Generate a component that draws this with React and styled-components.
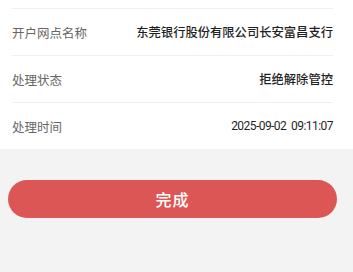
import React from "react";
import styled, { createGlobalStyle } from "styled-components";

const GlobalStyle = createGlobalStyle`
  html, body {
    margin: 0;
    padding: 0;
    background: #f3f3f3;
  }
  body {
    font-family: "Noto Sans CJK SC", "Noto Sans", sans-serif;
    -webkit-font-smoothing: antialiased;
  }
  * { box-sizing: border-box; }
`;

const Page = styled.div`
  width: 353px;
  min-height: 272px;
  background: #f3f3f3;
  display: flex;
  flex-direction: column;
`;

const InfoList = styled.div`
  background: #ffffff;
  padding: 8px 20px 0 12px;
  display: flex;
  flex-direction: column;
`;

const Row = styled.div`
  height: 47px;
  border-top: 1px solid #f0f0f0;
  display: flex;
  align-items: center;
  justify-content: space-between;
`;

const Label = styled.span`
  font-size: 12.5px;
  color: #666666;
  white-space: nowrap;
`;

const Value = styled.span`
  font-family: ${(p) =>
    p.$numeric
      ? '"Roboto", "Liberation Sans", sans-serif'
      : '"Noto Sans CJK SC", "Noto Sans", sans-serif'};
  font-size: ${(p) => (p.$numeric ? "12px" : "12.3px")};
  letter-spacing: ${(p) => (p.$numeric ? "-0.55px" : "0")};
  font-weight: ${(p) => (p.$numeric ? 400 : 500)};
  color: #1f1f1f;
  white-space: pre;
`;

const Footer = styled.div`
  padding: 31px 16px 0 8px;
`;

const DoneButton = styled.button`
  width: 100%;
  height: 38px;
  border: none;
  border-radius: 19px;
  background: #dc5656;
  color: #ffffff;
  font-family: "Noto Sans CJK SC", "Noto Sans", sans-serif;
  font-size: 16px;
  font-weight: 500;
  letter-spacing: 1px;
  display: flex;
  align-items: center;
  justify-content: center;
  padding: 0;
  cursor: pointer;
`;

const rows = [
  { label: "开户网点名称", value: "东莞银行股份有限公司长安富昌支行" },
  { label: "处理状态", value: "拒绝解除管控" },
  { label: "处理时间", value: "2025-09-02  09:11:07", numeric: true },
];

export default function App() {
  return (
    <>
      <GlobalStyle />
      <Page>
        <InfoList>
          {rows.map((r) => (
            <Row key={r.label}>
              <Label>{r.label}</Label>
              <Value $numeric={r.numeric}>{r.value}</Value>
            </Row>
          ))}
        </InfoList>
        <Footer>
          <DoneButton>完成</DoneButton>
        </Footer>
      </Page>
    </>
  );
}
